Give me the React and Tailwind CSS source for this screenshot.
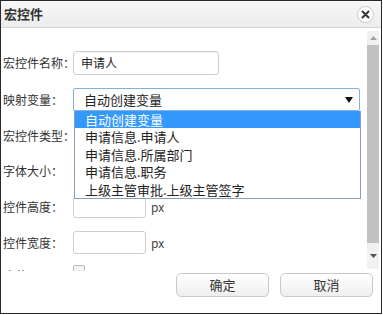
import React from "react";

const font = { fontFamily: '"Microsoft YaHei", "Noto Sans CJK SC", "Liberation Sans", sans-serif' };

const options = [
  "自动创建变量",
  "申请信息.申请人",
  "申请信息.所属部门",
  "申请信息.职务",
  "上级主管审批.上级主管签字",
];

function Label({ children }) {
  return <div className="w-[72px] shrink-0 pl-[2px] text-[12px] text-[#333] whitespace-nowrap">{children}</div>;
}

export default function App() {
  return (
    <div className="w-[382px] h-[314px] bg-white border border-[#2a2a2a] flex flex-col overflow-hidden" style={font}>
      {/* title bar */}
      <div className="h-[27px] shrink-0 flex items-center justify-between pl-[3px] pr-[7px] bg-gradient-to-b from-[#f7f7f7] to-[#ececec] border-b border-[#d4d4d4]">
        <span className="text-[13px] font-bold text-[#333]">宏控件</span>
        <div className="w-[17px] h-[17px] rounded-full border border-[#c8c8c8] bg-white flex items-center justify-center">
          <svg width="9" height="9" viewBox="0 0 9 9">
            <path d="M1.5 1.5 L7.5 7.5 M7.5 1.5 L1.5 7.5" stroke="#333" strokeWidth="2" strokeLinecap="round" />
          </svg>
        </div>
      </div>

      {/* body */}
      <div className="h-[243px] shrink-0 flex">
        <div className="relative flex-1 overflow-hidden flex flex-col">
          <div className="mt-[23px] h-[24px] shrink-0 flex items-center">
            <Label>宏控件名称：</Label>
            <div className="w-[146px] h-[24px] border border-[#cfcfcf] rounded-[3px] flex items-center pl-[7px] text-[12px] text-[#222] shadow-[inset_0_1px_2px_rgba(0,0,0,0.06)]">
              申请人
            </div>
          </div>
          <div className="mt-[13px] h-[23px] shrink-0 flex items-center">
            <Label>映射变量：</Label>
            <div className="w-[287px] h-[23px] border border-[#86b0dc] rounded-[2px] flex items-center justify-between pl-[10px] pr-[6px] text-[13px] text-[#222]">
              <span>自动创建变量</span>
              <svg width="8" height="6" viewBox="0 0 8 6">
                <path d="M0 0 L8 0 L4 6 Z" fill="#111" />
              </svg>
            </div>
          </div>
          <div className="mt-[13px] h-[24px] shrink-0 flex items-center">
            <Label>宏控件类型：</Label>
          </div>
          <div className="mt-[11px] h-[24px] shrink-0 flex items-center">
            <Label>字体大小：</Label>
          </div>
          <div className="mt-[13px] h-[22px] shrink-0 flex items-center">
            <Label>控件高度：</Label>
            <div className="w-[73px] h-[22px] border border-[#cfcfcf] rounded-[3px]" />
            <span className="ml-[5px] text-[12px] text-[#444]">px</span>
          </div>
          <div className="mt-[13px] h-[23px] shrink-0 flex items-center">
            <Label>控件宽度：</Label>
            <div className="w-[73px] h-[23px] border border-[#cfcfcf] rounded-[3px]" />
            <span className="ml-[5px] text-[12px] text-[#444]">px</span>
          </div>
          <div className="mt-[11px] h-[20px] shrink-0 flex items-start">
            <div className="pt-[2px]">
              <Label>隐藏：</Label>
            </div>
            <div className="w-[12px] h-[12px] border border-[#b8b8b8] rounded-[2px] bg-[#f4f4f4]" />
          </div>

          {/* open dropdown */}
          <div className="absolute left-[73px] top-[83px] w-[287px] h-[88px] bg-white border border-[#8a9fb8] border-t-0 flex flex-col">
            {options.map((o, i) => (
              <div
                key={o}
                className={`h-[17.4px] flex items-center pl-[10px] text-[13px] whitespace-nowrap ${
                  i === 0 ? "bg-[#3399ff] text-white" : "text-[#222]"
                }`}
              >
                {o}
              </div>
            ))}
          </div>
        </div>

        {/* scrollbar */}
        <div className="w-[12px] mr-[2px] mt-[3px] mb-[2px] bg-[#f1f1f1] flex flex-col items-center">
          <div className="h-[14px] flex items-center justify-center">
            <svg width="7" height="4" viewBox="0 0 7 4">
              <path d="M0 4 L7 4 L3.5 0 Z" fill="#a3a3a3" />
            </svg>
          </div>
          <div className="w-[12px] h-[198px] bg-[#c1c1c1]" />
          <div className="flex-1 flex items-center justify-center">
            <svg width="7" height="4" viewBox="0 0 7 4">
              <path d="M0 0 L7 0 L3.5 4 Z" fill="#505050" />
            </svg>
          </div>
        </div>
      </div>

      {/* footer */}
      <div className="flex-1 flex items-start pt-[2px] pl-[175px] gap-[11px]">
        <button className="w-[93px] h-[24px] rounded-[5px] border border-[#c9c9c9] bg-gradient-to-b from-white to-[#eeeeee] text-[13px] text-[#333]">
          确定
        </button>
        <button className="w-[93px] h-[24px] rounded-[5px] border border-[#c9c9c9] bg-gradient-to-b from-white to-[#eeeeee] text-[13px] text-[#333]">
          取消
        </button>
      </div>
    </div>
  );
}
